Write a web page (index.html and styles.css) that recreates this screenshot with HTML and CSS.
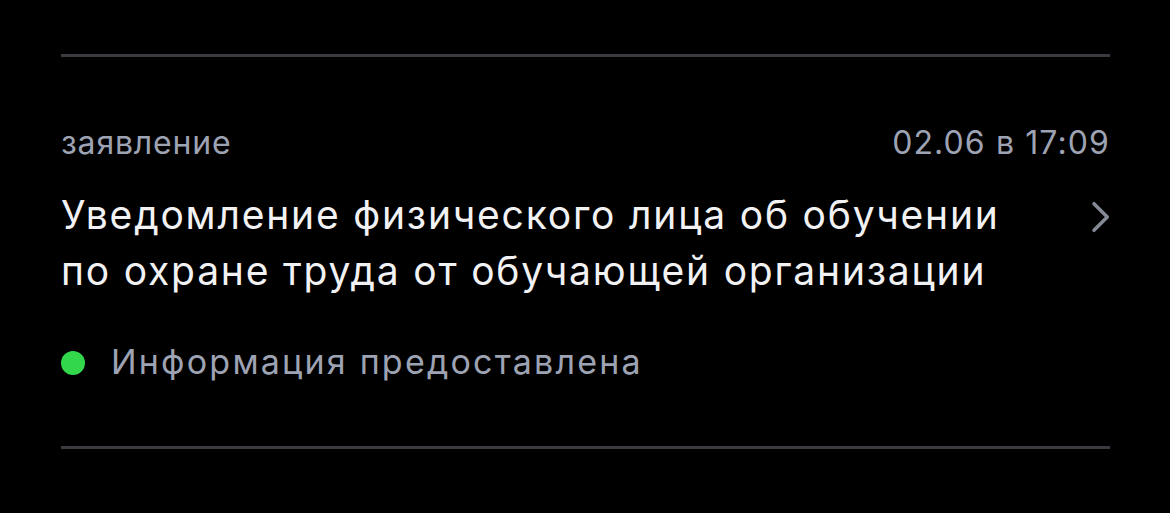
FILE: index.html
```html
<!DOCTYPE html>
<html lang="ru">
<head>
<meta charset="utf-8">
<link rel="stylesheet" href="styles.css">
</head>
<body>
<div class="list">
  <div class="divider"></div>
  <div class="item">
    <div class="meta">
      <span class="type">заявление</span>
      <span class="date">02.06 в 17:09</span>
    </div>
    <div class="main">
      <div class="title">Уведомление физического лица об обучении по охране труда от обучающей организации</div>
      <svg class="chevron" width="20" height="32" viewBox="0 0 20 32"><path d="M4 2.7 L17.3 16 L4 29.3" fill="none" stroke="#858995" stroke-width="3.5" stroke-linecap="round" stroke-linejoin="round"/></svg>
    </div>
    <div class="status">
      <span class="dot"></span>
      <span class="status-text">Информация предоставлена</span>
    </div>
  </div>
  <div class="divider"></div>
</div>
</body>
</html>
```
FILE: styles.css
```css
html, body {
  margin: 0;
  padding: 0;
  background: #000;
}
body {
  font-family: Inter, "Noto Sans", sans-serif;
  -webkit-font-smoothing: antialiased;
}
.list {
  padding: 54px 60px 0 61px;
}
.divider {
  height: 3px;
  background: #3a3a40;
}
.item {
  box-sizing: border-box;
  height: 389px;
  padding-top: 68px;
}
.meta {
  display: flex;
  justify-content: space-between;
  align-items: baseline;
  font-size: 32px;
  line-height: 36px;
  color: #9ea3b3;
  letter-spacing: 0.8px;
}
.date {
  letter-spacing: 1.1px;
}
.main {
  display: flex;
  justify-content: space-between;
  align-items: flex-start;
  margin-top: 26px;
}
.title {
  font-size: 39px;
  line-height: 56px;
  color: #f2f2f4;
  letter-spacing: 1.8px;
  width: 990px;
}
.chevron {
  margin-top: 14px;
}
.status {
  display: flex;
  align-items: center;
  margin-top: 43px;
}
.dot {
  width: 24px;
  height: 24px;
  border-radius: 50%;
  background: #32d74b;
  margin-right: 26px;
  margin-top: 2px;
}
.status-text {
  font-size: 34px;
  line-height: 40px;
  letter-spacing: 2.2px;
  color: #9ea3b3;
}
```
